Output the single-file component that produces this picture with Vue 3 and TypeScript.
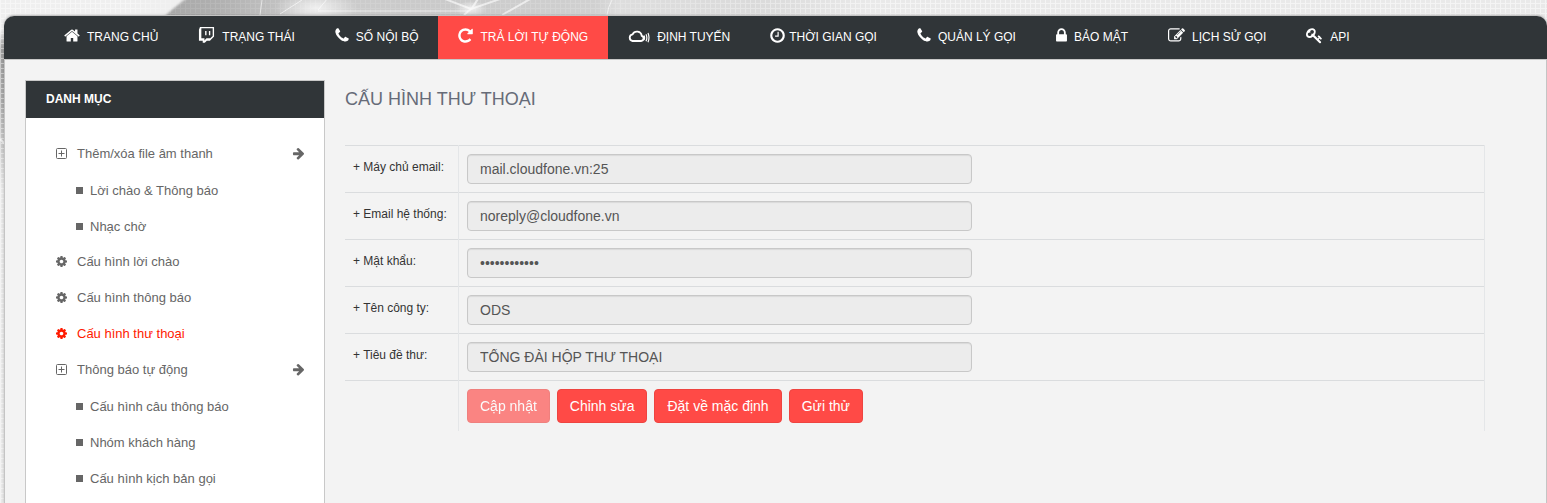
<script setup lang="ts">
import { ref } from 'vue'

interface Glyph {
  box: string
  width: number
  height: number
  path: string
}

interface NavItem {
  label: string
  icon: string
  active?: boolean
  tight?: boolean
}

interface MenuItem {
  label: string
  icon: 'plus' | 'cog'
  active?: boolean
  children?: string[]
}

interface Field {
  id: string
  label: string
  type: 'text' | 'password'
  value: string
}

const glyphs: Record<string, Glyph> = {
  home: {
    box: '64 0 1664 1792',
    width: 16,
    height: 17,
    path: 'M1472 992v480q0 26-19 45t-45 19h-384v-384h-256v384h-384q-26 0-45-19t-19-45v-480q0-1 .5-3t.5-3l575-474 575 474q1 2 1 6zm223-69l-62 74q-8 9-21 11h-3q-13 0-21-7l-692-577-692 577q-12 8-24 7-13-2-21-11l-62-74q-8-10-7-23.5t11-21.5l719-599q32-26 76-26t76 26l244 204v-195q0-14 9-23t23-9h192q14 0 23 9t9 23v408l219 182q10 8 11 21.5t-7 23.5z',
  },
  twitch: {
    box: '0 0 1792 1792',
    width: 17,
    height: 17,
    path: 'M896 434v434h-145v-434h145zm398 0v434h-145v-434h145zm0 760l253-254v-796h-1194v1050h326v217l217-217h398zm398-1194v1013l-434 434h-326l-217 217h-217v-217h-398v-1158l109-289h1483z',
  },
  phone: {
    box: '192 0 1408 1792',
    width: 14,
    height: 17,
    path: 'M1600 1240q0 27-10 70.5t-21 68.5q-21 50-122 106-94 51-186 51-27 0-52.5-3.5t-57.5-12.5-47.5-14.5-55.5-20.5-49-18q-98-35-175-83-128-79-264.5-215.5t-215.5-264.5q-48-77-83-175-3-9-18-49t-20.5-55.5-14.5-47.5-12.5-57.5-3.5-52.5q0-92 51-186 56-101 106-122 25-11 68.5-21t70.5-10q14 0 21 3 18 6 53 76 11 19 30 54t35 63.5 31 53.5q3 4 17.5 25t21.5 35.5 7 28.5q0 20-28.5 50t-62 55-62 53-28.5 46q0 9 5 22.5t8.5 20.5 14 24 11.5 19q76 137 174 235t235 174q2 1 19 11.5t24 14 20.5 8.5 22.5 5q18 0 46-28.5t53-62 55-62 50-28.5q14 0 28.5 7t35.5 21.5 25 17.5q25 15 53.5 31t63.5 35 54 30q70 35 76 53 3 7 3 21z',
  },
  repeat: {
    box: '128 0 1536 1792',
    width: 15,
    height: 17,
    path: 'M1664 256v448q0 26-19 45t-45 19h-448q-42 0-59-40-17-39 14-69l138-138q-148-137-349-137-104 0-198.5 40.5t-163.5 109.5-109.5 163.5-40.5 198.5 40.5 198.5 109.5 163.5 163.5 109.5 198.5 40.5q119 0 225-52t179-147q7-10 23-12 15 0 25 9l137 138q9 8 9.5 20.5t-7.5 22.5q-109 132-264 204.5t-327 72.5q-156 0-298-61t-245-164-164-245-61-298 61-298 164-245 245-164 298-61q147 0 284.5 55.5t244.5 156.5l130-129q29-31 70-14 39 17 39 59z',
  },
  clock: {
    box: '128 0 1536 1792',
    width: 15,
    height: 17,
    path: 'M1024 544v448q0 14-9 23t-23 9h-320q-14 0-23-9t-9-23v-64q0-14 9-23t23-9h224v-352q0-14 9-23t23-9h64q14 0 23 9t9 23zm416 352q0-148-73-273t-198-198-273-73-273 73-198 198-73 273 73 273 198 198 273 73 273-73 198-198 73-273zm224 0q0 209-103 385.5t-279.5 279.5-385.5 103-385.5-103-279.5-279.5-103-385.5 103-385.5 279.5-279.5 385.5-103 385.5 103 279.5 279.5 103 385.5z',
  },
  lock: {
    box: '320 0 1152 1792',
    width: 11,
    height: 17,
    path: 'M640 768h512v-192q0-106-75-181t-181-75-181 75-75 181v192zm832 96v576q0 40-28 68t-68 28h-960q-40 0-68-28t-28-68v-576q0-40 28-68t68-28h32v-192q0-184 132-316t316-132 316 132 132 316v192h32q40 0 68 28t28 68z',
  },
  edit: {
    box: '0 0 1792 1792',
    width: 17,
    height: 17,
    path: 'M888 1184l116-116-152-152-116 116v56h96v96h56zm440-720q-16-16-33 1l-350 350q-17 17-1 33t33-1l350-350q17-17 1-33zm80 594v190q0 119-84.5 203.5t-203.5 84.5h-832q-119 0-203.5-84.5t-84.5-203.5v-832q0-119 84.5-203.5t203.5-84.5h832q63 0 117 25 15 7 18 23 3 17-9 29l-49 49q-14 14-32 8-23-6-45-6h-832q-66 0-113 47t-47 113v832q0 66 47 113t113 47h832q66 0 113-47t47-113v-126q0-13 9-22l64-64q15-15 35-7t20 29zm-96-738l288 288-672 672h-288v-288zm444 132l-92 92-288-288 92-92q28-28 68-28t68 28l152 152q28 28 28 68t-28 68z',
  },
  key: {
    box: '0 0 1792 1792',
    width: 17,
    height: 17,
    path: 'M832 512q0-80-56-136t-136-56-136 56-56 136q0 42 19 83-41-19-83-19-80 0-136 56t-56 136 56 136 136 56 136-56 56-136q0-42-19-83 41 19 83 19 80 0 136-56t56-136zm851 704q0 17-49 66t-66 49q-9 0-28.500-16t-36.500-33-38.500-40-24.500-26l-96 96 220 220q28 28 28 68 0 42-39 81t-81 39q-40 0-68-28l-671-671q-176 131-365 131-163 0-265.500-102.500t-102.500-265.500q0-160 95-313t248-248 313-95q163 0 265.500 102.500t102.500 265.500q0 189-131 365l355 355 96-96q-3-3-26-24.500t-40-38.500-33-36.500-16-28.500q0-17 49-66t66-49q13 0 23 10 6 6 46 44.500t82 79.500 86.500 86 73 78 28.500 41z',
  },
}

const cogPath =
  'M1152 896q0-106-75-181t-181-75-181 75-75 181 75 181 181 75 181-75 75-181zm512-109v222q0 12-8 23t-20 13l-185 28q-19 54-39 91 35 50 107 138 10 12 10 25t-9 23q-27 37-99 108t-94 71q-12 0-26-9l-138-108q-44 23-91 38-16 136-29 186-7 28-36 28h-222q-14 0-24.5-8.5t-11.5-21.5l-28-184q-49-16-90-37l-141 107q-10 9-25 9-14 0-25-11-126-114-165-168-7-10-7-23 0-12 8-23 15-21 51-66.5t54-70.5q-27-50-41-99l-183-27q-13-2-21-12.5t-8-23.5v-222q0-12 8-23t19-13l186-28q14-46 39-92-40-57-107-138-10-12-10-24 0-10 9-23 26-36 98.5-107.5t94.5-71.5q13 0 26 10l138 107q44-23 91-38 16-136 29-186 7-28 36-28h222q14 0 24.5 8.5t11.5 21.5l28 184q49 16 90 37l142-107q9-9 24-9 13 0 25 10 129 119 165 170 7 8 7 22 0 12-8 23-15 21-51 66.5t-54 70.5q26 50 41 98l183 28q13 2 21 12.5t8 23.5z'

const arrowPath =
  'M1600 960q0 54-37 91l-651 651q-39 37-91 37-51 0-90-37l-75-75q-38-38-38-91t38-91l293-293h-704q-52 0-84.5-37.5t-32.5-90.5v-128q0-53 32.5-90.5t84.5-37.5h704l-293-294q-38-36-38-90t38-90l75-75q38-38 90-38 53 0 91 38l651 651q37 35 37 90z'

const navItems: NavItem[] = [
  { label: 'TRANG CHỦ', icon: 'home' },
  { label: 'TRẠNG THÁI', icon: 'twitch' },
  { label: 'SỐ NỘI BỘ', icon: 'phone' },
  { label: 'TRẢ LỜI TỰ ĐỘNG', icon: 'repeat', active: true },
  { label: 'ĐỊNH TUYẾN', icon: 'cloud' },
  { label: 'THỜI GIAN GỌI', icon: 'clock', tight: true },
  { label: 'QUẢN LÝ GỌI', icon: 'phone' },
  { label: 'BẢO MẬT', icon: 'lock' },
  { label: 'LỊCH SỬ GỌI', icon: 'edit' },
  { label: 'API', icon: 'key' },
]

const menu: MenuItem[] = [
  { label: 'Thêm/xóa file âm thanh', icon: 'plus', children: ['Lời chào & Thông báo', 'Nhạc chờ'] },
  { label: 'Cấu hình lời chào', icon: 'cog' },
  { label: 'Cấu hình thông báo', icon: 'cog' },
  { label: 'Cấu hình thư thoại', icon: 'cog', active: true },
  {
    label: 'Thông báo tự động',
    icon: 'plus',
    children: ['Cấu hình câu thông báo', 'Nhóm khách hàng', 'Cấu hình kịch bản gọi'],
  },
]

const fields = ref<Field[]>([
  { id: 'mail-server', label: '+ Máy chủ email:', type: 'text', value: 'mail.cloudfone.vn:25' },
  { id: 'system-email', label: '+ Email hệ thống:', type: 'text', value: 'noreply@cloudfone.vn' },
  { id: 'password', label: '+ Mật khẩu:', type: 'password', value: 'voicemail123' },
  { id: 'company', label: '+ Tên công ty:', type: 'text', value: 'ODS' },
  { id: 'subject', label: '+ Tiêu đề thư:', type: 'text', value: 'TỔNG ĐÀI HỘP THƯ THOẠI' },
])

const editing = ref(false)
</script>

<template>
  <div class="page">
    <svg class="backdrop" width="1547" height="503" viewBox="0 0 1547 503" aria-hidden="true">
      <defs>
        <linearGradient id="globe" x1="130" x2="870" y1="0" y2="0" gradientUnits="userSpaceOnUse">
          <stop offset="0" stop-color="#a2a2a2" />
          <stop offset="0.12" stop-color="#b0b0b0" />
          <stop offset="0.25" stop-color="#cccccc" />
          <stop offset="0.42" stop-color="#cacaca" />
          <stop offset="0.63" stop-color="#d0d0d0" />
          <stop offset="0.66" stop-color="#dedede" />
          <stop offset="0.85" stop-color="#dadada" />
          <stop offset="1" stop-color="#e9e9e9" />
        </linearGradient>
        <linearGradient id="edge" x1="0" x2="0" y1="30" y2="190" gradientUnits="userSpaceOnUse">
          <stop offset="0" stop-color="#9c9c9c" stop-opacity="0" />
          <stop offset="0.12" stop-color="#9c9c9c" />
          <stop offset="0.45" stop-color="#aaaaaa" />
          <stop offset="1" stop-color="#aaaaaa" stop-opacity="0" />
        </linearGradient>
        <radialGradient id="glow">
          <stop offset="0" stop-color="#fff" stop-opacity="0.7" />
          <stop offset="1" stop-color="#fff" stop-opacity="0" />
        </radialGradient>
        <pattern id="grid" width="5" height="5" patternUnits="userSpaceOnUse">
          <path d="M0 3.5h5M0.5 0v5" stroke="#fff" />
        </pattern>
        <linearGradient id="grid-fade" x1="130" x2="900" y1="0" y2="0" gradientUnits="userSpaceOnUse">
          <stop offset="0" stop-color="#fff" stop-opacity="0.45" />
          <stop offset="0.06" stop-color="#fff" stop-opacity="0.1" />
          <stop offset="0.6" stop-color="#fff" stop-opacity="0.15" />
          <stop offset="1" stop-color="#fff" stop-opacity="0.5" />
        </linearGradient>
        <mask id="grid-mask">
          <rect width="1547" height="503" fill="url(#grid-fade)" />
        </mask>
        <filter id="soft"><feGaussianBlur stdDeviation="1" /></filter>
      </defs>
      <rect width="1547" height="503" fill="#e9e9e9" />
      <rect width="180" height="40" fill="#efefef" />
      <path d="M163 18Q174 7 190-4H875V18Z" fill="url(#globe)" filter="url(#soft)" />
      <rect y="30" width="6" height="160" fill="url(#edge)" />
      <rect width="1547" height="503" fill="url(#grid)" mask="url(#grid-mask)" />
      <ellipse cx="316" cy="8" rx="42" ry="16" fill="url(#glow)" />
      <ellipse cx="471" cy="9" rx="16" ry="8" fill="url(#glow)" />
      <g fill="none" stroke="#fff" stroke-opacity="0.6">
        <path d="M262 0l-2 15M318 11h150" />
        <path d="M445-1l26 10l32-11M464 15l8-7l6-9M502 15l30-17" stroke-width="2" />
        <path d="M318 10l10-12M280 14l22-14M612 0q-4 7-5 15" />
        <path d="M0 139l5 5" stroke-width="2" />
      </g>
    </svg>

    <div class="panel">
      <nav class="topnav" aria-label="Menu chính">
        <a v-for="item in navItems" :key="item.label" href="#" class="topnav-link" :class="{ active: item.active, tight: item.tight }">
          <svg v-if="item.icon === 'cloud'" class="cloud" width="22" height="17" viewBox="0 0 22 17" aria-hidden="true">
            <path d="M4.5 14h8.6a2.6 2.6 0 0 0 .6-5.1a4.800 4.800 0 0 0-9.1-1.6a3.400 3.400 0 0 0-.1 6.700z" stroke-width="1.8" />
            <path d="M16 8.500q1.200 2.200 0 4.500M18 7.200q1.700 3.500 0 7M20 6q2 4.600 0 9.200" stroke-width="1.2" />
          </svg>
          <svg v-else :width="glyphs[item.icon].width" :height="glyphs[item.icon].height" :viewBox="glyphs[item.icon].box" aria-hidden="true">
            <path :d="glyphs[item.icon].path" />
          </svg>
          <span>{{ item.label }}</span>
        </a>
      </nav>

      <div class="body">
        <aside class="sidebar">
          <h2 class="sidebar-title">DANH MỤC</h2>
          <ul class="menu">
            <li v-for="item in menu" :key="item.label">
              <a href="#" class="menu-link" :class="{ active: item.active }">
                <svg v-if="item.icon === 'plus'" class="plus" width="11" height="11" viewBox="0 0 11 11" aria-hidden="true">
                  <rect x=".5" y=".5" width="10" height="10" rx="1" />
                  <path d="M2.500 5.500h6M5.500 2.500v6" />
                </svg>
                <svg v-else class="cog" width="11" height="13" viewBox="128 0 1536 1792" aria-hidden="true">
                  <path :d="cogPath" />
                </svg>
                <span class="menu-label">{{ item.label }}</span>
                <svg v-if="item.children" class="arrow" width="12" height="13" viewBox="0 64 1600 1728" aria-hidden="true">
                  <path :d="arrowPath" />
                </svg>
              </a>
              <ul v-if="item.children" class="submenu">
                <li v-for="child in item.children" :key="child">
                  <a href="#" class="submenu-link"><i class="bullet"></i>{{ child }}</a>
                </li>
              </ul>
            </li>
          </ul>
        </aside>

        <main class="content">
          <h1 class="title">CẤU HÌNH THƯ THOẠI</h1>
          <form @submit.prevent>
            <table class="form-table">
              <tbody>
                <tr v-for="field in fields" :key="field.id">
                  <th scope="row"><label :for="field.id">{{ field.label }}</label></th>
                  <td>
                    <input :id="field.id" v-model="field.value" :type="field.type" :readonly="!editing" autocomplete="off" />
                  </td>
                </tr>
                <tr>
                  <th></th>
                  <td>
                    <div class="actions">
                      <button type="submit" class="btn" :disabled="!editing">Cập nhật</button>
                      <button type="button" class="btn" @click="editing = true">Chỉnh sửa</button>
                      <button type="button" class="btn">Đặt về mặc định</button>
                      <button type="button" class="btn">Gửi thử</button>
                    </div>
                  </td>
                </tr>
              </tbody>
            </table>
          </form>
        </main>
      </div>
    </div>
  </div>
</template>

<style>
body {
  margin: 0;
  background: #e9e9e9;
}
</style>

<style scoped>
.page {
  position: relative;
  display: flex;
  box-sizing: border-box;
  min-height: 100vh;
  padding: 15px 0 0 4px;
  overflow: hidden;
  font-family: "Liberation Sans", Arial, sans-serif;
  font-size: 13px;
  color: #666;
}

.backdrop {
  position: absolute;
  top: 0;
  left: 0;
}

.panel {
  position: relative;
  display: flex;
  flex: 1;
  flex-direction: column;
  border: 1px solid #c4c4c4;
  border-bottom: 0;
  border-radius: 10px 10px 0 0;
  background: #f3f3f3;
  box-shadow: 0 0 3px rgba(0, 0, 0, 0.2);
}

.topnav {
  display: flex;
  height: 43px;
  margin: 0 -1px;
  padding-left: 40px;
  border-bottom: 1px solid #c8c8c8;
  border-radius: 10px 10px 0 0;
  background: #303538;
}

.topnav-link {
  display: flex;
  align-items: center;
  gap: 7px;
  padding: 0 20px 2px;
  color: #fff;
  font-size: 12px;
  line-height: 16px;
  text-decoration: none;
  white-space: nowrap;
}

.topnav-link.tight {
  gap: 4px;
}

.topnav-link.active {
  background: #ff4a46;
}

.topnav-link svg {
  flex: none;
  margin-bottom: 2px;
  fill: #fff;
}

.topnav-link .cloud {
  fill: none;
  stroke: #fff;
}

.body {
  display: flex;
  flex: 1;
  gap: 20px;
  padding: 20px 20px 0;
}

.sidebar {
  flex: none;
  box-sizing: border-box;
  width: 300px;
  border: 1px solid #c8c8c8;
  border-bottom: 0;
  background: #fff;
}

.sidebar-title {
  margin: 0;
  padding: 0 20px;
  background: #303538;
  color: #fff;
  font-size: 12px;
  line-height: 37px;
}

.menu,
.submenu {
  margin: 0;
  padding: 0;
  list-style: none;
}

.menu {
  padding: 17px 20px 0 30px;
}

.menu-link,
.submenu-link {
  display: flex;
  align-items: center;
  box-sizing: border-box;
  height: 36px;
  gap: 10px;
  color: #666;
  text-decoration: none;
}

.menu-link.active {
  color: #ff1a00;
}

.menu-label {
  flex: 1;
}

.submenu {
  padding-left: 20px;
}

.submenu-link {
  gap: 7px;
  padding-top: 2px;
}

.bullet {
  width: 7px;
  height: 7px;
  background: #666;
}

.cog,
.arrow {
  fill: currentColor;
}

.plus {
  fill: none;
  stroke: currentColor;
}

.content {
  flex: 1;
  min-width: 0;
  padding-right: 41px;
}

.title {
  margin: 0 0 31px;
  padding-top: 4px;
  color: #666b78;
  font-size: 18px;
  font-weight: 400;
  line-height: 30px;
}

.form-table {
  width: 100%;
  border-collapse: collapse;
}

.form-table th,
.form-table td {
  padding: 8px;
  border-top: 1px solid #dadcde;
  border-right: 1px solid #e4e6e8;
  text-align: left;
  vertical-align: top;
}

.form-table th {
  width: 97px;
  padding-top: 12px;
  color: #333;
  font-size: 12px;
  font-weight: 400;
  line-height: 18px;
  white-space: nowrap;
}

.form-table input {
  display: block;
  box-sizing: border-box;
  width: 505px;
  max-width: 100%;
  height: 30px;
  padding: 4px 12px;
  border: 1px solid #c8c8c8;
  border-radius: 4px;
  background: #ececec;
  box-shadow: inset 0 1px 1px rgba(0, 0, 0, 0.08);
  color: #555;
  font: 14px/20px "Liberation Sans", Arial, sans-serif;
}

.actions {
  display: flex;
  gap: 7px;
}

.btn {
  padding: 6px 12px;
  border: 1px solid #ee4440;
  border-radius: 4px;
  background: #ff4a46;
  color: #fff;
  font: 14px/20px "Liberation Sans", Arial, sans-serif;
  cursor: pointer;
}

.btn:disabled {
  opacity: 0.65;
  cursor: not-allowed;
}
</style>
